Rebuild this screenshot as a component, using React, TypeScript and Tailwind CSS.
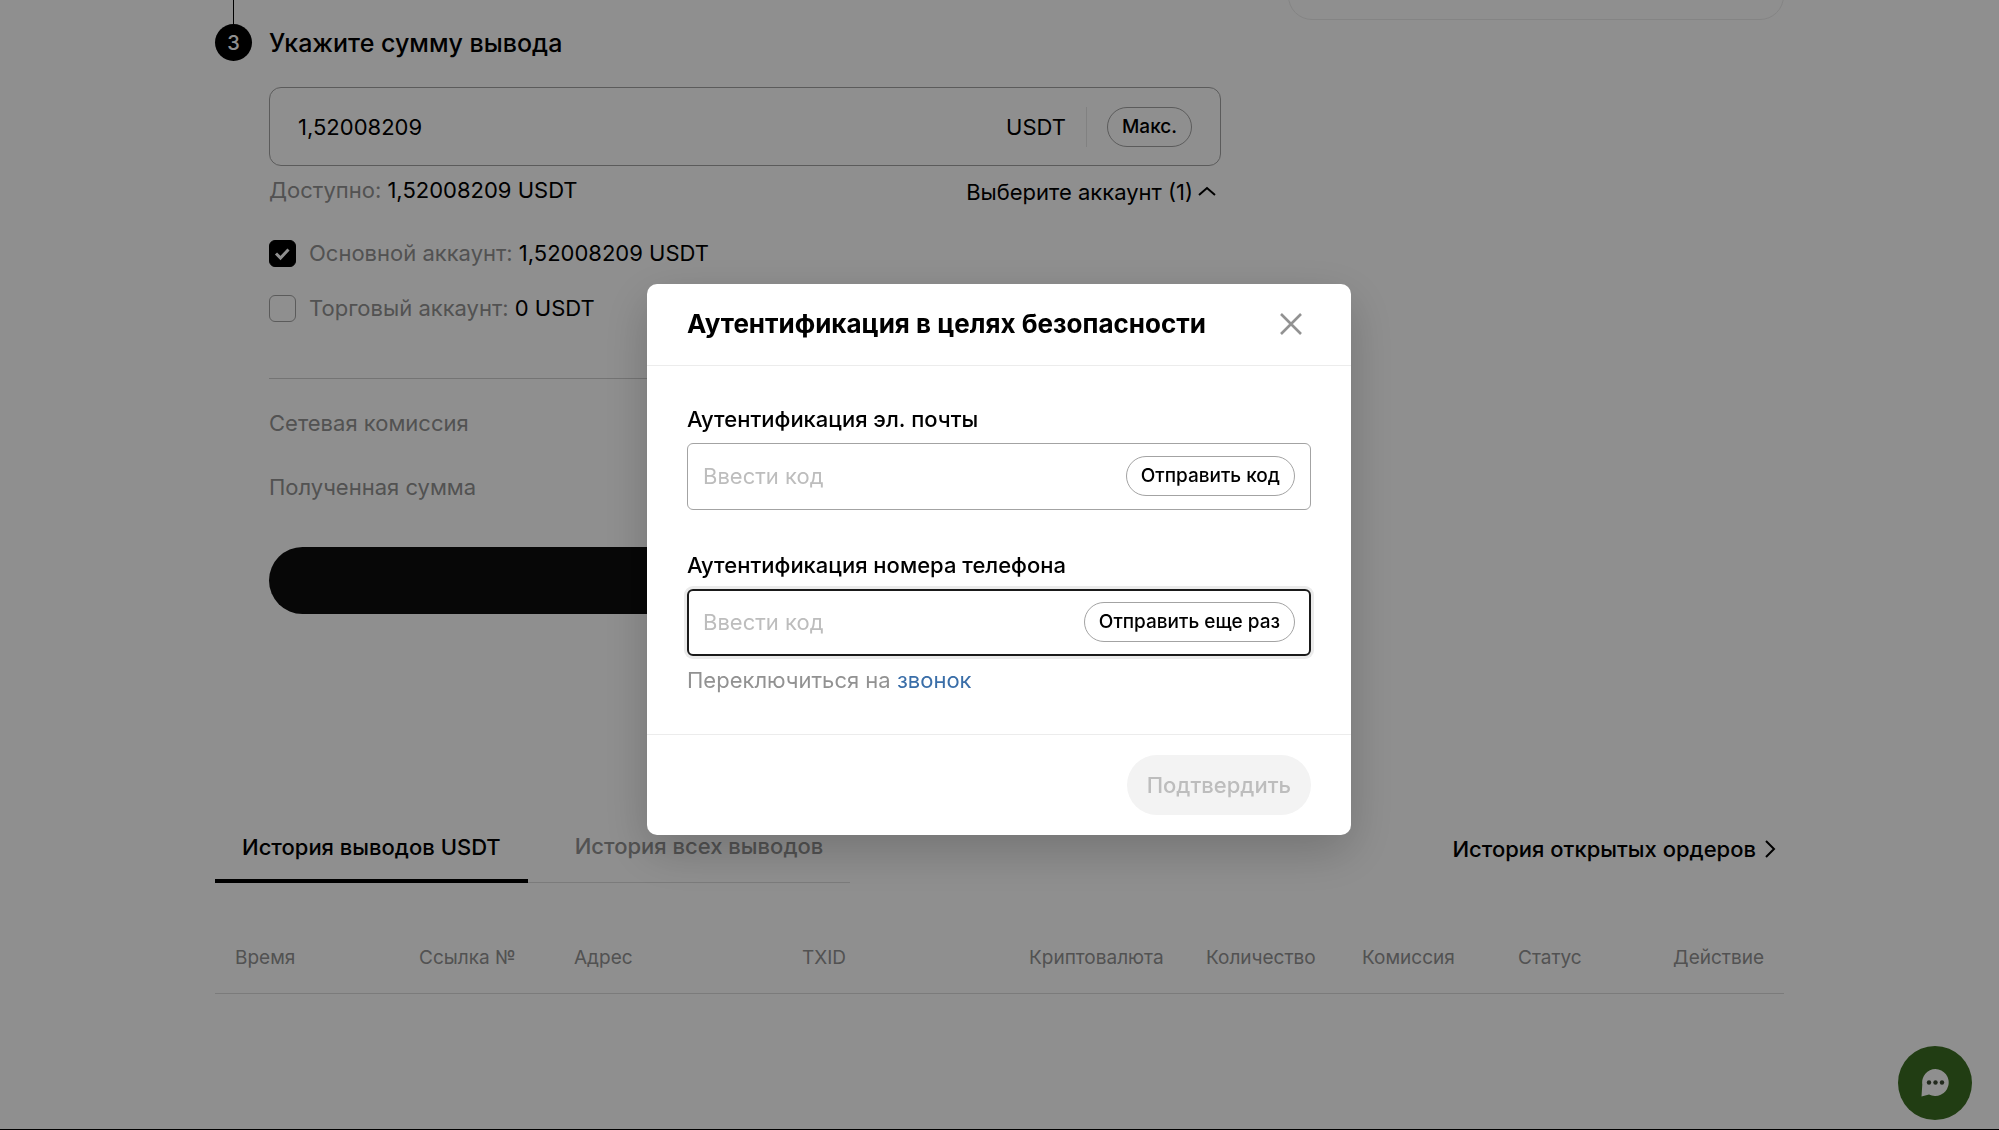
import React, { useState } from 'react'

const columns = [
  { label: 'Время', className: 'w-[184px]' },
  { label: 'Ссылка №', className: 'w-[155px]' },
  { label: 'Адрес', className: 'w-[228px]' },
  { label: 'TXID', className: 'w-[227px]' },
  { label: 'Криптовалюта', className: 'w-[177px]' },
  { label: 'Количество', className: 'w-[156px]' },
  { label: 'Комиссия', className: 'w-[156px]' },
  { label: 'Статус', className: 'w-[129px]' },
  { label: 'Действие', className: 'text-right' },
]

interface AccountOptionProps {
  id: string
  label: string
  amount: string
  defaultChecked?: boolean
}

const AccountOption: React.FC<AccountOptionProps> = ({ id, label, amount, defaultChecked }) => (
  <div className="flex h-7 items-center gap-[13px]">
    <span className="relative size-[27px] shrink-0">
      <input
        id={id}
        type="checkbox"
        defaultChecked={defaultChecked}
        className="peer block size-[27px] appearance-none rounded-md border border-[#a3a3a3] checked:border-black checked:bg-black"
      />
      <svg
        viewBox="0 0 27 27"
        fill="none"
        className="pointer-events-none absolute inset-0 hidden size-[27px] peer-checked:block"
      >
        <path d="M7 13.500l4.500 4.500 8-8.500" stroke="white" strokeWidth="3" />
      </svg>
    </span>
    <label htmlFor={id} className="text-[#929292]">
      {label}: <span className="text-black">{amount}</span>
    </label>
  </div>
)

interface CodeFieldProps {
  id: string
  label: string
  action: string
  active?: boolean
}

const CodeField: React.FC<CodeFieldProps> = ({ id, label, action, active }) => {
  const [code, setCode] = useState('')

  return (
    <div>
      <label htmlFor={id} className="block h-10 font-medium leading-8">
        {label}
      </label>
      <div
        className={
          active
            ? 'flex h-[67px] items-center rounded-md border-2 border-[#1a1a1a] px-3.5 ring-3 ring-[#ebebeb]'
            : 'flex h-[67px] items-center rounded-md border border-[#a3a3a3] px-[15px]'
        }
      >
        <input
          id={id}
          value={code}
          onChange={(e) => setCode(e.target.value)}
          placeholder="Ввести код"
          className="w-0 flex-1 outline-none placeholder:text-[#bdbdbd]"
        />
        <button
          type="button"
          className="h-10 rounded-full border border-[#a3a3a3] px-3.5 text-[19px] font-medium"
        >
          {action}
        </button>
      </div>
    </div>
  )
}

const WithdrawForm: React.FC = () => (
  <section className="flex flex-1 gap-[17px]">
    {/* Step marker with the tail of the line from the previous step */}
    <div className="-mt-4 flex w-[37px] flex-col items-center">
      <div className="h-10 w-px shrink-0 bg-black" />
      <div className="flex size-[37px] shrink-0 items-center justify-center rounded-full bg-black text-xl font-medium text-white">
        3
      </div>
    </div>

    <div className="flex-1">
      <h2 className="pb-7 pt-[27px] text-[25px] font-medium leading-8">Укажите сумму вывода</h2>

      <div className="flex h-[79px] items-center rounded-xl border border-[#a3a3a3] px-7">
        <input
          aria-label="Сумма вывода"
          defaultValue="1,52008209"
          className="w-0 flex-1 outline-none"
        />
        <span>USDT</span>
        <span className="mx-5 h-10 w-px bg-[#e6e6e6]" />
        <button
          type="button"
          className="h-10 rounded-full border border-[#a3a3a3] px-3.5 text-[19px] font-medium"
        >
          Макс.
        </button>
      </div>

      <div className="flex h-[59px] items-start justify-between pt-2">
        <p className="text-[#929292]">
          Доступно: <span className="text-black">1,52008209 USDT</span>
        </p>
        <button type="button" className="flex items-center gap-1 pr-1 pt-0.5">
          Выберите аккаунт (1)
          <svg width="20" height="12" viewBox="0 0 20 12" fill="none">
            <path d="M2 9l8-7 8 7" stroke="black" strokeWidth="2" />
          </svg>
        </button>
      </div>

      <div className="flex flex-col gap-[27px] pt-3.5">
        <AccountOption id="main-account" label="Основной аккаунт" amount="1,52008209 USDT" defaultChecked />
        <AccountOption id="trade-account" label="Торговый аккаунт" amount="0 USDT" />
      </div>

      <div className="mt-14 border-t border-[#cfcfcf] pt-7 text-[#929292]">
        <p>Сетевая комиссия</p>
        <p className="pt-8">Полученная сумма</p>
      </div>

      <button type="submit" aria-label="Далее" className="mt-11 h-[67px] w-full rounded-full bg-[#0d0d0d]" />
    </div>
  </section>
)

const History: React.FC = () => (
  <section className="pt-48">
    <div className="flex items-start justify-between">
      <div role="tablist" className="flex border-b border-[#dcdcdc] font-medium">
        <button
          role="tab"
          type="button"
          aria-selected="true"
          className="-mb-px mr-5 h-[69px] border-b-4 border-black px-[27px]"
        >
          История выводов USDT
        </button>
        <button role="tab" type="button" aria-selected="false" className="h-[68px] px-[27px] pb-1 text-[#929292]">
          История всех выводов
        </button>
      </div>
      <a href="#orders" className="flex h-[69px] items-center gap-2 pr-2 font-medium">
        История открытых ордеров
        <svg width="12" height="20" viewBox="0 0 12 20" fill="none">
          <path d="M2 2l8 8-8 8" stroke="black" strokeWidth="2" />
        </svg>
      </a>
    </div>

    <table className="mt-10 w-full table-fixed border-b border-[#dcdcdc] text-[19px] text-[#929292]">
      <thead>
        <tr className="h-[70px]">
          {columns.map((column) => (
            <th key={column.label} scope="col" className={`p-0 font-normal ${column.className === 'text-right' ? 'pr-5 text-right' : `pl-5 text-left ${column.className}`}`}>
              {column.label}
            </th>
          ))}
        </tr>
      </thead>
    </table>
  </section>
)

const SecurityDialog: React.FC = () => (
  <div className="fixed inset-0 flex items-center justify-center bg-black/44 pb-3 pr-px">
    <div
      role="dialog"
      aria-modal="true"
      aria-labelledby="dialog-title"
      className="w-176 rounded-[10px] bg-white shadow-[0_16px_48px_rgba(0,0,0,0.2)]"
    >
      <header className="flex h-[82px] items-center justify-between border-b border-[#ececec] px-10">
        <h1 id="dialog-title" className="text-[26px] font-bold">
          Аутентификация в целях безопасности
        </h1>
        <button type="button" aria-label="Закрыть" className="p-2">
          <svg width="24" height="24" viewBox="0 0 24 24" fill="none">
            <path d="M2 2l20 20M22 2L2 22" stroke="#929292" strokeWidth="2.6" />
          </svg>
        </button>
      </header>

      <div className="flex flex-col gap-[39px] px-10 pb-9 pt-[37px]">
        <CodeField id="email-code" label="Аутентификация эл. почты" action="Отправить код" />
        <div>
          <CodeField id="phone-code" label="Аутентификация номера телефона" action="Отправить еще раз" active />
          <p className="pb-0.5 pt-2 text-[#929292]">
            Переключиться на{' '}
            <a href="#call" className="text-[#3a6ea8]">
              звонок
            </a>
          </p>
        </div>
      </div>

      <footer className="flex justify-end border-t border-[#ececec] px-10 py-5">
        <button type="submit" disabled className="h-15 rounded-full bg-[#f3f3f3] px-5 font-medium text-[#bdbdbd]">
          Подтвердить
        </button>
      </footer>
    </div>
  </div>
)

export default function App() {
  return (
    <div className="min-h-screen overflow-hidden border-b border-black bg-white font-['Inter','Liberation_Sans',sans-serif] text-[22px] leading-8 text-black">
      <main className="mx-auto max-w-[1569px]">
        <div className="flex gap-[67px]">
          <WithdrawForm />
          <aside className="-mt-12 h-17 w-124 rounded-3xl border border-[#ececec]" />
        </div>
        <History />
      </main>

      <button
        type="button"
        aria-label="Чат поддержки"
        className="fixed bottom-2.5 right-[27px] flex size-[74px] items-center justify-center rounded-full bg-[#3c6e22]"
      >
        <svg width="30" height="30" viewBox="0 0 30 30">
          <path d="M15.500 1a13.500 13.500 0 1 1-6.500 25.500L1.500 28.500l.8-12A13.500 13.500 0 0 1 15.500 1z" fill="white" />
          <circle cx="9" cy="14.500" r="2.200" fill="#3c4a34" />
          <circle cx="15.500" cy="14.500" r="2.200" fill="#3c4a34" />
          <circle cx="22" cy="14.500" r="2.200" fill="#3c4a34" />
        </svg>
      </button>

      <SecurityDialog />
    </div>
  )
}
